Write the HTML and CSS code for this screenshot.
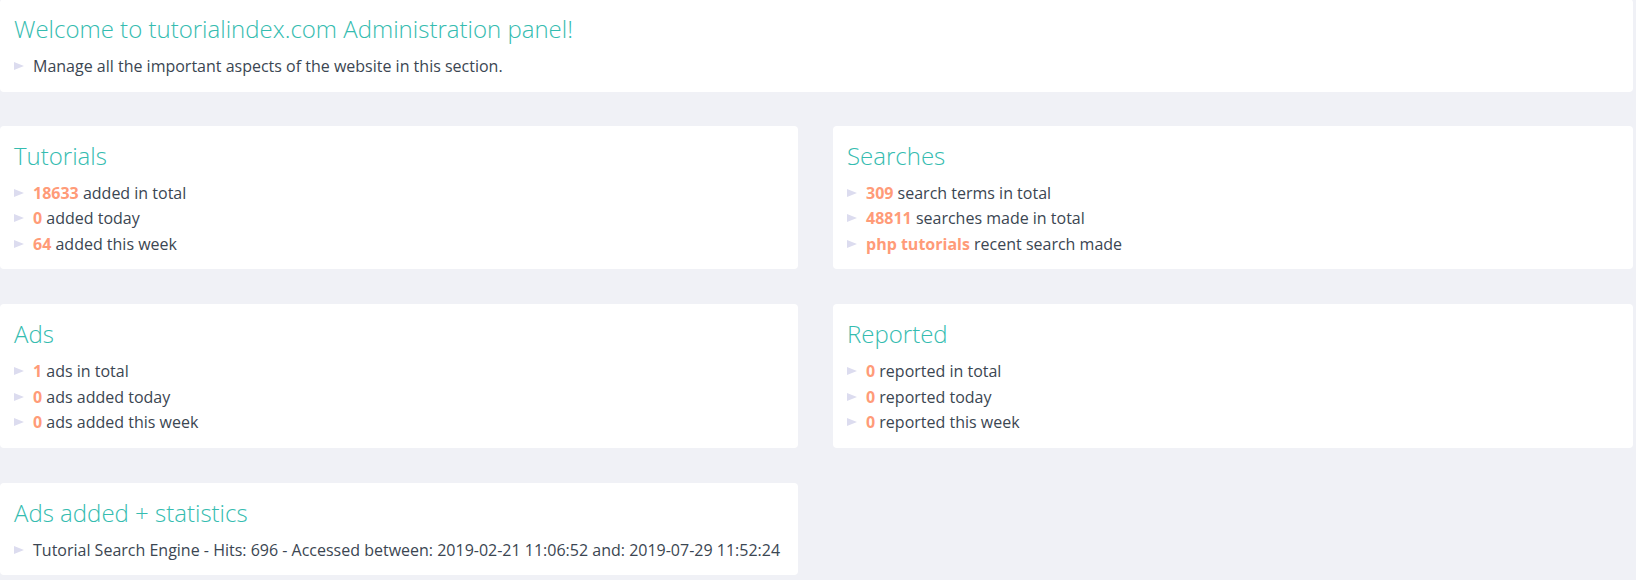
FILE: index.html
```html
<!DOCTYPE html>
<html lang="en">
<head>
<meta charset="utf-8">
<title>Administration panel</title>
<link rel="stylesheet" href="styles.css">
</head>
<body>
<div class="page">
  <section class="card card-wide">
    <h2 class="card-title">Welcome to tutorialindex.com Administration panel!</h2>
    <ul class="list">
      <li>Manage all the important aspects of the website in this section.</li>
    </ul>
  </section>

  <div class="grid">
    <section class="card">
      <h2 class="card-title">Tutorials</h2>
      <ul class="list">
        <li><b class="num">18633</b> added in total</li>
        <li><b class="num">0</b> added today</li>
        <li><b class="num">64</b> added this week</li>
      </ul>
    </section>
    <section class="card">
      <h2 class="card-title">Searches</h2>
      <ul class="list">
        <li><b class="num">309</b> search terms in total</li>
        <li><b class="num">48811</b> searches made in total</li>
        <li><b class="num">php tutorials</b> recent search made</li>
      </ul>
    </section>
    <section class="card">
      <h2 class="card-title">Ads</h2>
      <ul class="list">
        <li><b class="num">1</b> ads in total</li>
        <li><b class="num">0</b> ads added today</li>
        <li><b class="num">0</b> ads added this week</li>
      </ul>
    </section>
    <section class="card">
      <h2 class="card-title">Reported</h2>
      <ul class="list">
        <li><b class="num">0</b> reported in total</li>
        <li><b class="num">0</b> reported today</li>
        <li><b class="num">0</b> reported this week</li>
      </ul>
    </section>
    <section class="card">
      <h2 class="card-title">Ads added + statistics</h2>
      <ul class="list">
        <li>Tutorial Search Engine - Hits: 696 - Accessed between: 2019-02-21 11:06:52 and: 2019-07-29 11:52:24</li>
      </ul>
    </section>
  </div>
</div>
</body>
</html>
```

FILE: styles.css
```css
html, body {
  margin: 0;
  padding: 0;
}

body {
  background: #f0f1f6;
  font-family: "Open Sans", "Liberation Sans", sans-serif;
  font-size: 16px;
  color: #3b4652;
}

.page {
  width: 1633px;
  margin-top: -1px;
  display: flex;
  flex-direction: column;
  gap: 34px;
}

.grid {
  display: grid;
  grid-template-columns: 798px 800px;
  column-gap: 35px;
  row-gap: 35px;
}

.card {
  background: #ffffff;
  border-radius: 4px;
  padding: 15px 14px 12px;
}

.card-title {
  margin: 0 0 10px;
  font-size: 24px;
  font-weight: 300;
  line-height: 30px;
  color: #35bcb0;
}

.list {
  list-style: none;
  margin: 0;
  padding: 0;
}

.list li {
  line-height: 25.5px;
}

.list li::before {
  content: "";
  display: inline-block;
  width: 0;
  height: 0;
  border-left: 10px solid #dcdcef;
  border-top: 4.5px solid transparent;
  border-bottom: 4.5px solid transparent;
  vertical-align: 2px;
  margin-right: 9px;
}

.num {
  font-weight: 700;
  color: #ff9b78;
}
```
